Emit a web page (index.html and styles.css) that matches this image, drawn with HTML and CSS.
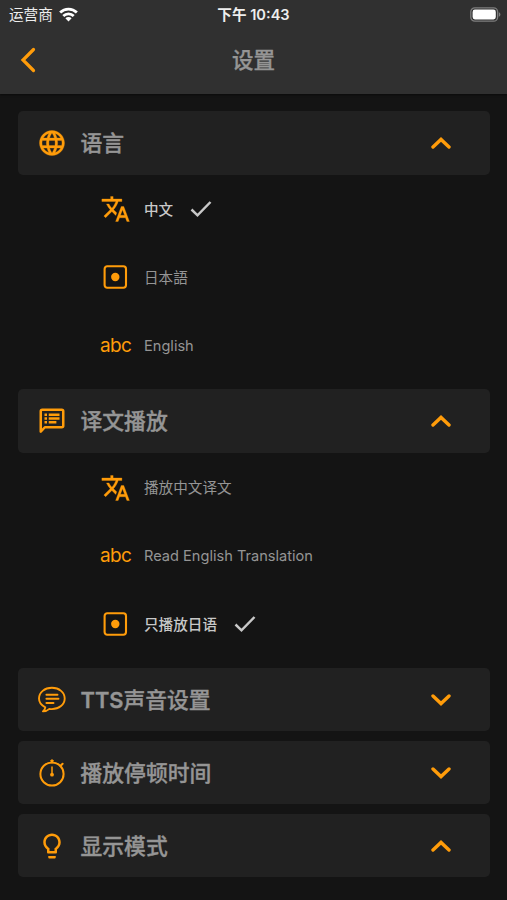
FILE: index.html
```html
<!DOCTYPE html>
<html lang="zh-CN">
<head>
  <meta charset="UTF-8" />
  <meta name="viewport" content="width=device-width, initial-scale=1.0" />
  <title>设置</title>
  <link rel="stylesheet" href="styles.css">
</head>
<body>
  <!-- shared icons -->
  <svg class="sprite" width="0" height="0">
    <symbol id="up" viewBox="0 0 20 12">
      <path d="M2 10 10 2.4 18 10" fill="none" stroke="currentColor" stroke-width="3.4" stroke-linecap="round" />
    </symbol>
    <symbol id="down" viewBox="0 0 20 12">
      <path d="M2 2 10 9.6 18 2" fill="none" stroke="currentColor" stroke-width="3.4" stroke-linecap="round" />
    </symbol>
    <symbol id="check" viewBox="0 0 22 18">
      <path d="M1.5 9.5 7.5 15.3 20.5 2" fill="none" stroke="currentColor" stroke-width="2.5" />
    </symbol>
    <symbol id="translate" viewBox="-0.5 0 24 24">
      <path fill="currentColor" stroke="currentColor" stroke-width=".25" d="M12.87 15.07l-2.54-2.51.03-.03c1.74-1.94 2.98-4.17 3.71-6.53H17V4h-7V2H8v2H1v1.99h11.17C11.5 7.92 10.44 9.75 9 11.35 8.07 10.32 7.3 9.19 6.69 8h-2c.73 1.63 1.73 3.17 2.98 4.56l-5.09 5.02L4 19l5-5 3.11 3.11.76-2.04zM18.5 10h-2L12 22h2l1.12-3h4.75L21 22h2l-4.5-12zm-2.62 7l1.62-4.33L19.12 17h-3.24z" />
    </symbol>
    <symbol id="square" viewBox="0 0 30 30">
      <rect x="4.6" y="4.3" width="21.4" height="21.4" rx="2.6" fill="none" stroke="currentColor" stroke-width="2.1" />
      <circle cx="15.3" cy="15" r="4.2" fill="currentColor" />
    </symbol>
  </svg>

  <header class="header">
    <div class="statusbar">
      <div class="carrier">
        <span>运营商</span>
        <svg class="wifi" viewBox="0 0 20 15" fill="none" stroke="#fff" stroke-width="2.9">
          <path d="M1.2 5.4a12.5 12.5 0 0 1 17.6 0" />
          <path d="M4.5 9.1a7.8 7.8 0 0 1 11 0" />
          <path d="M10 14.8 6.7 11.5a4.7 4.7 0 0 1 6.6 0z" fill="#fff" stroke="none" />
        </svg>
      </div>
      <div class="time">下午 10:43</div>
      <div class="status-right">
        <svg class="battery" viewBox="0 0 31 15">
          <rect x=".8" y=".8" width="26.8" height="13.4" rx="4" fill="none" stroke="#7d7d7d" stroke-width="1.3" />
          <rect x="2.6" y="2.6" width="23.2" height="9.8" rx="2.3" fill="#fff" />
          <path d="M28.8 5.2q1.6.6 1.6 2.3t-1.6 2.3z" fill="#7d7d7d" />
        </svg>
      </div>
    </div>
    <nav class="navbar">
      <svg class="back" viewBox="0 0 16 26">
        <path d="M13.5 2.5 3 13 13.5 23.5" fill="none" stroke="currentColor" stroke-width="3.2" stroke-linecap="round" />
      </svg>
      <h1 class="title">设置</h1>
    </nav>
  </header>

  <main class="settings">
    <section>
      <div class="card">
        <svg class="icon" viewBox="0 0 24 24">
          <path fill="currentColor" stroke="currentColor" stroke-width=".25" d="M11.99 2C6.47 2 2 6.48 2 12s4.47 10 9.99 10C17.52 22 22 17.52 22 12S17.52 2 11.99 2zm6.93 6h-2.95c-.32-1.25-.78-2.45-1.38-3.56 1.84.63 3.37 1.91 4.33 3.56zM12 4.04c.83 1.2 1.48 2.53 1.91 3.96h-3.82c.43-1.43 1.08-2.76 1.91-3.96zM4.26 14C4.1 13.36 4 12.69 4 12s.1-1.36.26-2h3.38c-.08.66-.14 1.32-.14 2s.06 1.34.14 2H4.26zm.82 2h2.95c.32 1.25.78 2.45 1.38 3.56-1.84-.63-3.37-1.9-4.33-3.56zm2.95-8H5.08c.96-1.66 2.49-2.93 4.33-3.56C8.81 5.55 8.35 6.75 8.03 8zM12 19.96c-.83-1.2-1.48-2.53-1.91-3.96h3.82c-.43 1.43-1.08 2.76-1.91 3.96zM14.34 14H9.66c-.09-.66-.16-1.32-.16-2s.07-1.35.16-2h4.68c.09.65.16 1.32.16 2s-.07 1.34-.16 2zm.25 5.56c.6-1.11 1.06-2.31 1.38-3.56h2.95c-.96 1.65-2.49 2.93-4.33 3.56zM16.36 14c.08-.66.14-1.32.14-2s-.06-1.34-.14-2h3.38c.16.64.26 1.31.26 2s-.1 1.36-.26 2h-3.38z" />
        </svg>
        <h2>语言</h2>
        <svg class="arrow"><use href="#up" /></svg>
      </div>
      <ul class="options">
        <li class="option selected">
          <svg class="icon"><use href="#translate" /></svg>
          <span>中文</span>
          <svg class="check"><use href="#check" /></svg>
        </li>
        <li class="option">
          <svg class="icon"><use href="#square" /></svg>
          <span>日本語</span>
        </li>
        <li class="option">
          <b class="abc">abc</b>
          <span>English</span>
        </li>
      </ul>
    </section>

    <section>
      <div class="card">
        <svg class="icon" viewBox="0 0 24 24" fill="none" stroke="currentColor">
          <path d="M3 20.5V4.200Q3 3 4.200 3H19.800Q21 3 21 4.200V15.800Q21 17 19.800 17H6.300z" stroke-width="2" stroke-linejoin="round" />
          <path d="M6 7h2M6 10h2M6 13h2M9.400 7H18M9.400 10H18M9.400 13H15.500" stroke-width="1.900" />
        </svg>
        <h2>译文播放</h2>
        <svg class="arrow"><use href="#up" /></svg>
      </div>
      <ul class="options">
        <li class="option">
          <svg class="icon"><use href="#translate" /></svg>
          <span>播放中文译文</span>
        </li>
        <li class="option">
          <b class="abc">abc</b>
          <span>Read English Translation</span>
        </li>
        <li class="option selected">
          <svg class="icon"><use href="#square" /></svg>
          <span>只播放日语</span>
          <svg class="check"><use href="#check" /></svg>
        </li>
      </ul>
    </section>

    <section>
      <div class="card">
        <svg class="icon" viewBox="0 0 30 30" fill="none" stroke="currentColor" stroke-width="1.9" stroke-linecap="round" stroke-linejoin="round">
          <path d="M8.300 22.300C4.300 20.300 2 17.200 2 13.500 2 7.400 7.600 2.800 14.900 2.800S27.700 7.400 27.700 13.500 22.100 24.100 14.900 24.100q-1.300 0-2.500-.2Q9.500 26.500 5.900 26.400 8.200 24.700 8.300 22.300z" />
          <path d="M9.400 9.700H20.500M9.400 13.700H21.500M9.400 18H16.500" />
        </svg>
        <h2><span class="latin">TTS</span>声音设置</h2>
        <svg class="arrow"><use href="#down" /></svg>
      </div>
    </section>

    <section>
      <div class="card">
        <svg class="icon" viewBox="0 0 30 30" fill="none" stroke="currentColor" stroke-width="2" stroke-linecap="round">
          <circle cx="15" cy="16" r="11.600" />
          <path d="M15 4.500V2.200M14.200 2.800h1.600M23.400 8 25.600 5.700" />
          <path d="M15 9V16" stroke-width="1.500" />
          <circle cx="15" cy="16.700" r="1.900" fill="currentColor" stroke="none" />
        </svg>
        <h2>播放停顿时间</h2>
        <svg class="arrow"><use href="#down" /></svg>
      </div>
    </section>

    <section>
      <div class="card">
        <svg class="icon" viewBox="0 0 24 24">
          <path fill="currentColor" d="M9 21c0 .55.45 1 1 1h4c.55 0 1-.45 1-1v-1H9v1zm3-19C8.140 2 5 5.140 5 9c0 2.380 1.190 4.470 3 5.740V17c0 .55.45 1 1 1h6c.55 0 1-.45 1-1v-2.260c1.810-1.270 3-3.360 3-5.740 0-3.860-3.140-7-7-7zm2.850 11.100l-.85.6V16h-4v-2.300l-.85-.6C7.800 12.160 7 10.630 7 9c0-2.760 2.240-5 5-5s5 2.240 5 5c0 1.630-.8 3.160-2.150 4.100z" />
        </svg>
        <h2>显示模式</h2>
        <svg class="arrow"><use href="#up" /></svg>
      </div>
    </section>
  </main>
</body>
</html>
```

FILE: styles.css
```css
* {
  box-sizing: border-box;
}
body {
  margin: 0;
  height: 900px;
  overflow: hidden;
  background-color: #141414;
  color: #959595;
  font-family: Inter, "Noto Sans CJK SC", sans-serif;
}
svg {
  display: block;
  flex-shrink: 0;
}
.sprite {
  display: none;
}
.header {
  height: 93.5px;
  background-color: #303030;
  box-shadow: 0 1px 2px rgba(0,0,0,0.5);
}
.statusbar {
  display: grid;
  grid-template-columns: 1fr auto 1fr;
  align-items: center;
  height: 27px;
  padding: 0 6px 0 9px;
  font-size: 14.6px;
  line-height: 28px;
  color: #eee;
}
.carrier {
  display: flex;
  align-items: center;
  gap: 6px;
}
.carrier span {
  padding-top: 1px;
}
.wifi {
  width: 19px;
  height: 15px;
}
.time {
  margin-right: 3px;
  font-size: 14.6px;
  font-weight: 600;
}
.status-right {
  display: flex;
  justify-content: flex-end;
}
.battery {
  width: 31px;
  height: 15px;
}
.navbar {
  display: grid;
  grid-template-columns: 1fr auto 1fr;
  align-items: center;
  height: 66px;
  padding: 0 20px;
}
.back {
  width: 16px;
  height: 26px;
  color: #ff9c0a;
}
.title {
  margin: 0;
  font-size: 21.5px;
  font-weight: 500;
  line-height: 30px;
  -webkit-text-stroke: 0.3px;
}
.settings {
  display: flex;
  flex-direction: column;
  gap: 9.5px;
  padding: 17.5px 17px 0 18px;
}
.card {
  display: flex;
  align-items: center;
  height: 63.5px;
  padding: 0 39px 0 19px;
  border-radius: 5px;
  background-color: #212121;
}
.card h2 {
  margin: 0 auto 0 13.5px;
  font-size: 21.8px;
  font-weight: 500;
  line-height: 32px;
  -webkit-text-stroke: 0.35px;
}
.latin {
  font-weight: 600;
}
.icon {
  width: 30px;
  height: 30px;
  color: #ff9c0a;
}
.arrow {
  width: 20px;
  height: 12px;
  color: #ff9c0a;
}
.options {
  margin: 0;
  padding: 0.5px 0 0 82px;
  list-style: none;
}
.option {
  display: flex;
  align-items: center;
  height: 68.33px;
  font-size: 14.6px;
}
.option .icon {
  margin-right: 14px;
}
.option span {
  padding-top: 1px;
  line-height: 22px;
}
.selected {
  color: #c8c8c8;
  font-weight: 500;
}
.abc {
  width: 44px;
  font-size: 19px;
  font-weight: 400;
  letter-spacing: -0.6px;
  color: #ff9c0a;
}
.check {
  width: 22px;
  height: 18px;
  margin-left: 17px;
}
```
